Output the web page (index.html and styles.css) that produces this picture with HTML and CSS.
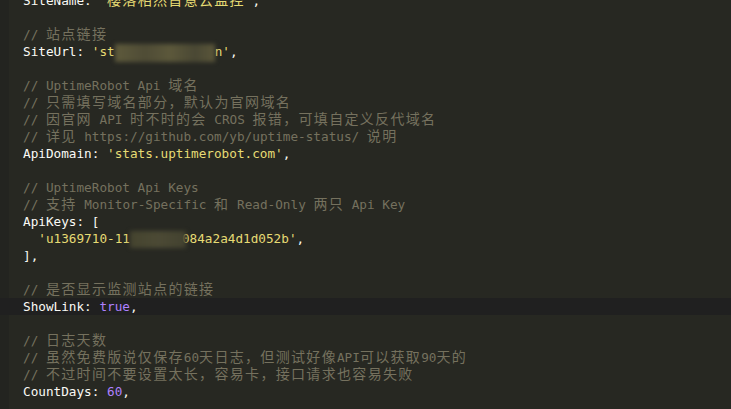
FILE: index.html
```html
<!DOCTYPE html>
<html lang="zh-CN">

<head>
    <meta charset="UTF-8">
    <meta name="viewport" content="width=device-width, initial-scale=1.0">
    <link rel="stylesheet" href="styles.css">
    <title>config.js</title>
</head>

<body>

    <div class="editor"> <!-- editor -->
        <div class="line"><span class="key">SiteName</span>: <span class="str">'<span class="zh">樱落相然首意云监控</span>'</span>,</div>
        <div class="line"></div>
        <div class="line"><span class="cmt">// <span class="zh">站点链接</span></span></div>
        <div class="line"><span class="key">SiteUrl</span>: <span class="str">'st<span class="mask mask-url"></span>n'</span>,</div>
        <div class="line"></div>
        <div class="line"><span class="cmt">// UptimeRobot Api <span class="zh">域名</span></span></div>
        <div class="line"><span class="cmt">// <span class="zh">只需填写域名部分，默认为官网域名</span></span></div>
        <div class="line"><span class="cmt">// <span class="zh">因官网</span> API <span class="zh">时不时的会</span> CROS <span class="zh">报错，可填自定义反代域名</span></span></div>
        <div class="line"><span class="cmt">// <span class="zh">详见</span> https://github.com/yb/uptime-status/ <span class="zh">说明</span></span></div>
        <div class="line"><span class="key">ApiDomain</span>: <span class="str">'stats.uptimerobot.com'</span>,</div>
        <div class="line"></div>
        <div class="line"><span class="cmt">// UptimeRobot Api Keys</span></div>
        <div class="line"><span class="cmt">// <span class="zh">支持</span> Monitor-Specific <span class="zh">和</span> Read-Only <span class="zh">两只</span> Api Key</span></div>
        <div class="line"><span class="key">ApiKeys</span>: [</div>
        <div class="line">  <span class="str">'u1369710-11<span class="mask mask-key"></span>084a2a4d1d052b'</span>,</div>
        <div class="line">],</div>
        <div class="line"></div>
        <div class="line"><span class="cmt">// <span class="zh">是否显示监测站点的链接</span></span></div>
        <div class="line active"><span class="key">ShowLink</span>: <span class="num">true</span>,</div>
        <div class="line"></div>
        <div class="line"><span class="cmt">// <span class="zh">日志天数</span></span></div>
        <div class="line"><span class="cmt">// <span class="zh">虽然免费版说仅保存</span>60<span class="zh">天日志，但测试好像</span>API<span class="zh">可以获取</span>90<span class="zh">天的</span></span></div>
        <div class="line"><span class="cmt">// <span class="zh">不过时间不要设置太长，容易卡，接口请求也容易失败</span></span></div>
        <div class="line"><span class="key">CountDays</span>: <span class="num">60</span>,</div>
        <div class="line"></div>
    </div> <!-- fim editor -->

</body>

</html>
```

FILE: styles.css
```css
html,
body {
    margin: 0;
    height: 100%;
    background-color: #272822;
    overflow: hidden;
}

.editor {
    margin-top: -8px;
    min-height: 100%;
    background: linear-gradient(to right, #232420 9px, #272822 9px);
    font-family: "DejaVu Sans Mono", "Liberation Mono", monospace;
    font-size: 12.7px;
    color: #f8f8f2;
}

.line {
    height: 17px;
    line-height: 17px;
    padding-left: 23px;
    white-space: pre;
}

.active {
    background-color: #202020;
}

.key {
    color: #fafaf5;
}

.str {
    color: #e6db74;
}

.cmt {
    color: #75715e;
}

.num {
    color: #ae81ff;
}

.zh {
    font-family: "Noto Sans CJK SC", sans-serif;
    font-size: 14px;
    line-height: 1;
    letter-spacing: 1.32px;
}

.mask {
    display: inline-block;
    vertical-align: middle;
    filter: blur(2px);
}

.mask-url {
    width: 100px;
    height: 18px;
    background: linear-gradient(to right, #5e5a3c, #4f4c36 30%, #5c583b 55%, #4a4834 80%, #5a563a);
}

.mask-key {
    width: 56px;
    height: 17px;
    margin-right: -4px;
    background: linear-gradient(to right, #45442f, #4c4a35 50%, #434230);
}
```
